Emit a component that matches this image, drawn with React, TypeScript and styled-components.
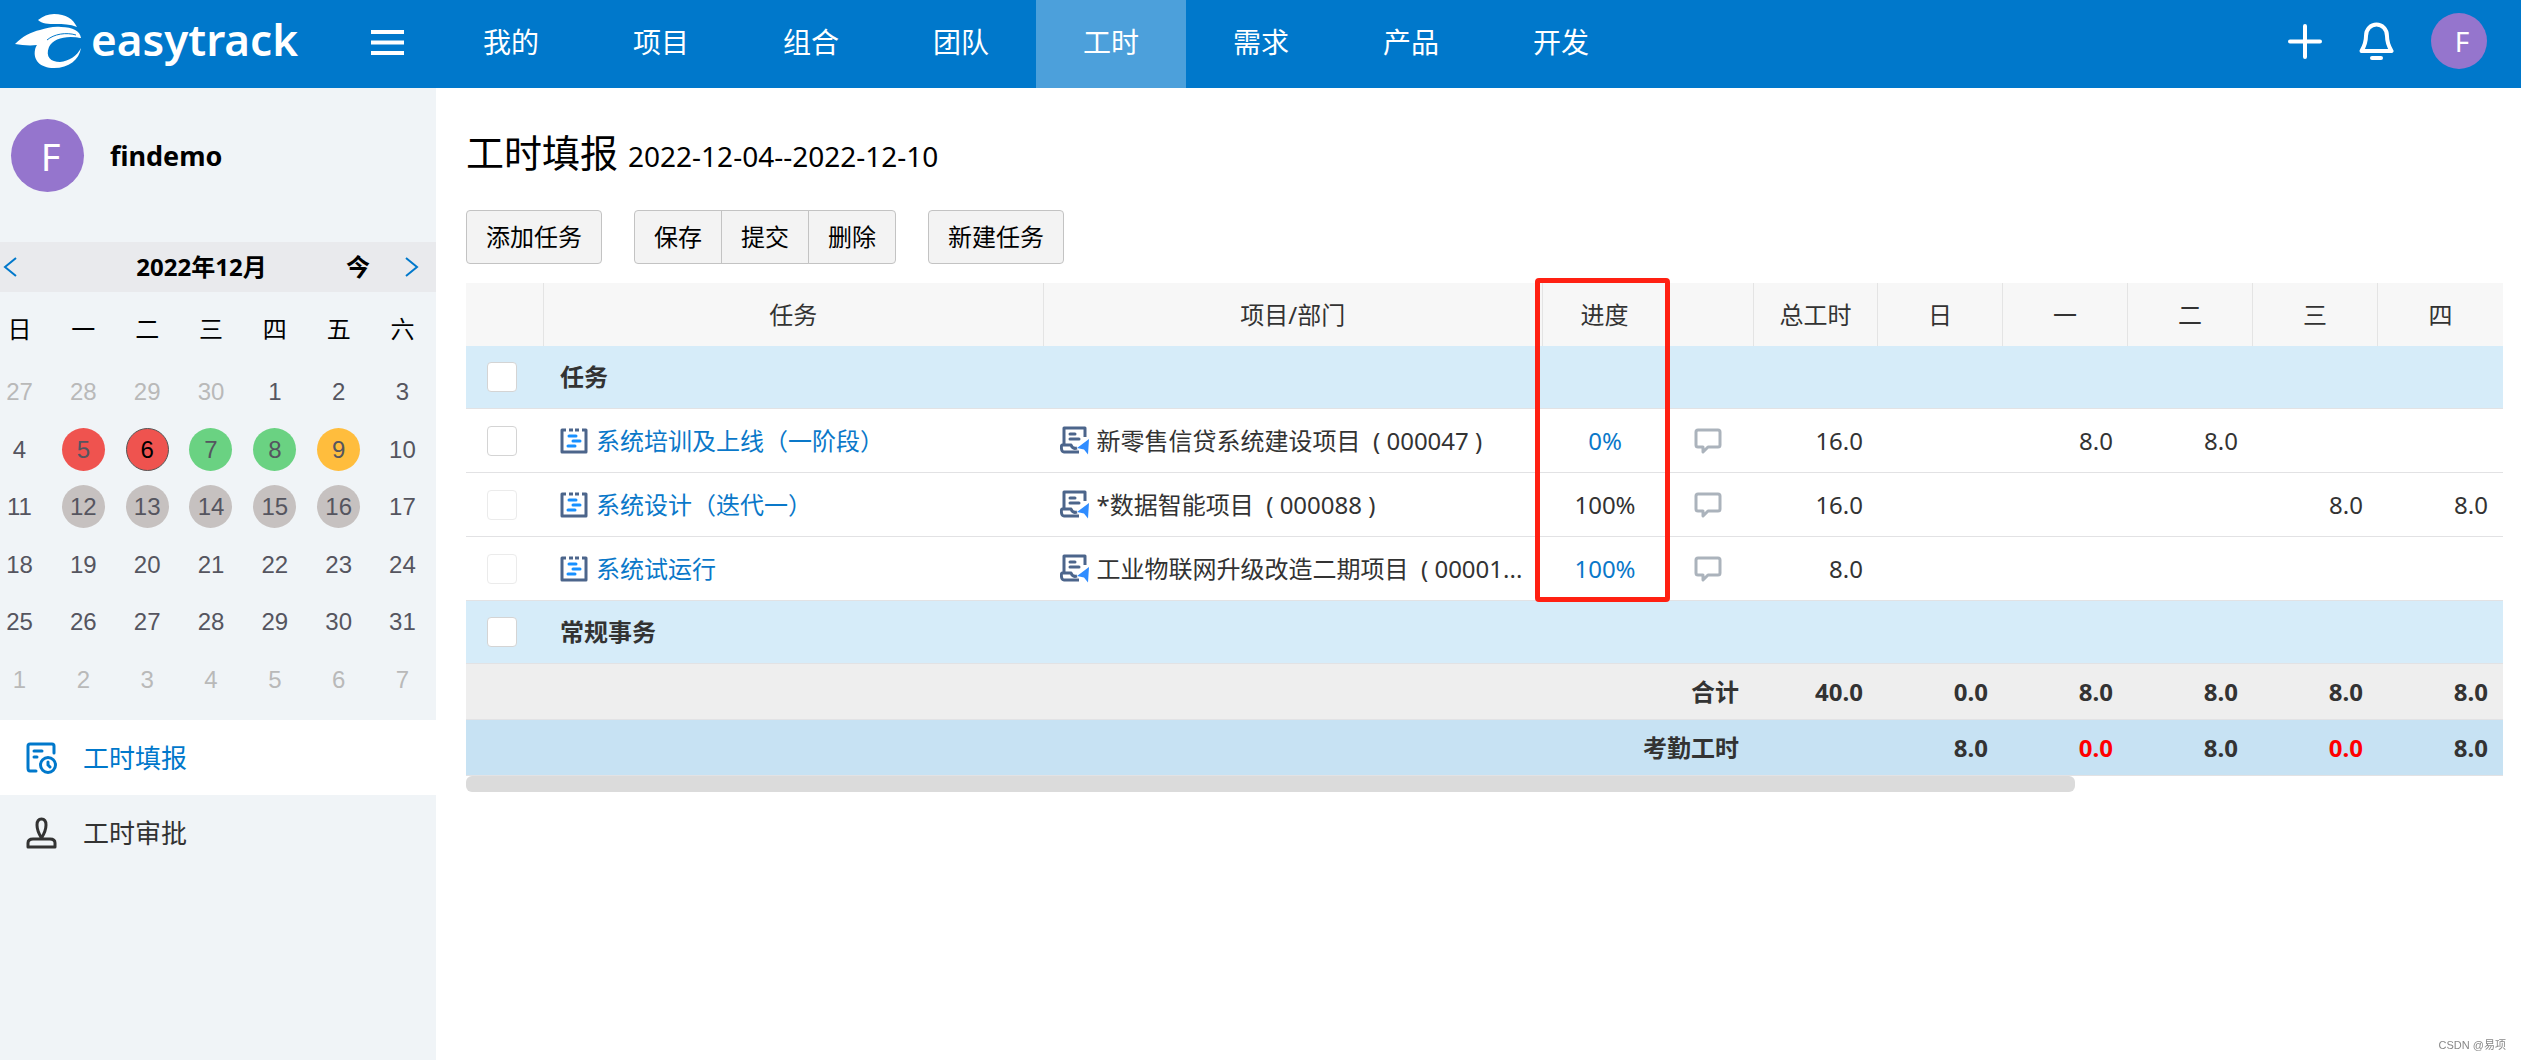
import React from 'react';
import styled, { createGlobalStyle, css } from 'styled-components';

const sans = `"Noto Sans", "Noto Sans CJK SC", sans-serif`;

const Global = createGlobalStyle`
  *, *::before, *::after { box-sizing: border-box; }
  body { margin: 0; background: #fff; color: #333; font-family: ${sans}; font-size: 24px; line-height: 32px; }
  button { font: inherit; color: inherit; background: none; border: 0; padding: 0; cursor: pointer; }
  a { color: inherit; text-decoration: none; }
  svg { display: block; flex: none; }
`;

const Page = styled.div`
  display: flex;
  flex-direction: column;
  min-height: 100vh;
`;

const TopBar = styled.header`
  display: flex;
  height: 88px;
  background: #0078cb;
  color: #fff;
`;

const Brand = styled.div`
  display: flex;
  width: 436px;
  flex: none;
  justify-content: space-between;
  padding: 0 32px 0 14px;
`;

const Logo = styled.a`
  display: flex;
  gap: 7px;
  padding-top: 13px;
`;

const LogoText = styled.span`
  font-size: 44px;
  font-weight: 600;
  line-height: 52px;
`;

const MenuButton = styled.button`
  display: flex;
  align-self: flex-start;
  margin-top: 30px;
`;

const Nav = styled.nav`
  display: flex;
  flex: 1;
`;

const NavLink = styled.a<{ $active?: boolean }>`
  width: 150px;
  font-size: 28px;
  line-height: 84px;
  text-align: center;
  background: ${p => (p.$active ? '#4ca0db' : 'transparent')};
`;

const Tools = styled.div`
  display: flex;
  align-items: center;
  gap: 37px;
  height: 82px;
  padding-right: 34px;
`;

const Avatar = styled.span<{ $size: number; $font: number }>`
  display: flex;
  align-items: center;
  justify-content: center;
  width: ${p => p.$size}px;
  height: ${p => p.$size}px;
  padding-left: 6px;
  border-radius: 50%;
  background: #9575cd;
  color: #fff;
  font-size: ${p => p.$font}px;
`;

const Body = styled.div`
  display: flex;
  flex: 1;
`;

const Sidebar = styled.aside`
  width: 436px;
  flex: none;
  background: #f0f4f7;
`;

const Profile = styled.div`
  display: flex;
  align-items: flex-start;
  gap: 26px;
  height: 154px;
  padding: 31px 11px 0;
  color: #000;
`;

const UserName = styled.strong`
  font-size: 27px;
  line-height: 74px;
`;

const MonthBar = styled.div`
  display: grid;
  grid-template-columns: 56px 1fr 40px 58px;
  align-items: center;
  height: 50px;
  padding-left: 3px;
  background: #e9eaed;
  color: #000;
  font-weight: 700;
`;

const Month = styled.span`
  padding-left: 6px;
  text-align: center;
`;

const ArrowButton = styled.button<{ $end?: boolean }>`
  display: flex;
  justify-content: ${p => (p.$end ? 'flex-end' : 'flex-start')};
  padding-right: ${p => (p.$end ? 17 : 0)}px;
`;

const Week = styled.div`
  display: grid;
  grid-template-columns: repeat(7, 43px);
  justify-content: space-between;
  margin-left: -2px;
  padding: 21px 12px 18px 0;
  text-align: center;
  color: #000;
`;

const Days = styled.div`
  display: grid;
  grid-template-columns: repeat(7, 43px);
  grid-template-rows: repeat(6, 1fr);
  justify-content: space-between;
  align-items: center;
  height: 345px;
  margin: 0 12px 12px -2px;
`;

type Tone = 'red' | 'green' | 'amber' | 'grey';
const toneColor: Record<Tone, string> = {
  red: '#ef534f',
  green: '#6ad282',
  amber: '#ffbd3d',
  grey: '#c6c1c0',
};

const Day = styled.button<{ $muted: boolean; $tone?: Tone; $today: boolean }>`
  height: 43px;
  border-radius: 50%;
  font-family: "Liberation Sans", sans-serif;
  line-height: 41px;
  color: ${p => (p.$today ? '#000' : p.$muted ? '#b9b9b9' : '#55555f')};
  background: ${p => (p.$tone ? toneColor[p.$tone] : 'transparent')};
  ${p => p.$today && css`border: 1px solid #555;`}
`;

const SideLink = styled.a<{ $active?: boolean }>`
  display: flex;
  align-items: center;
  gap: 25px;
  height: 75px;
  padding-left: 26px;
  font-size: 26px;
  color: ${p => (p.$active ? '#0078cb' : '#333')};
  background: ${p => (p.$active ? '#fff' : 'transparent')};
`;

const Main = styled.main`
  flex: 1;
  min-width: 0;
  padding: 36px 18px 0 30px;
`;

const Title = styled.h1`
  margin: 0 0 26px;
  font-size: 38px;
  font-weight: 400;
  line-height: 56px;
  color: #000;
`;

const Range = styled.span`
  margin-left: 10px;
  font-size: 28px;
`;

const Toolbar = styled.div`
  display: flex;
  gap: 32px;
  margin-bottom: 19px;
`;

const ButtonGroup = styled.div`
  display: flex;
`;

const Button = styled.button`
  height: 54px;
  padding: 0 19px;
  border: 1px solid #c3c3c3;
  background: #f3f3f3;
  color: #000;
  &:first-child { border-radius: 4px 0 0 4px; }
  &:last-child { border-radius: 0 4px 4px 0; }
  &:only-child { border-radius: 4px; }
  & + & { margin-left: -1px; }
`;

const Table = styled.table`
  width: 100%;
  table-layout: fixed;
  border-collapse: separate;
  border-spacing: 0;
`;

const Col = styled.col<{ $w?: number }>`
  width: ${p => (p.$w ? `${p.$w}px` : 'auto')};
`;

const Head = styled.th`
  position: relative;
  height: 63px;
  padding: 0;
  font-weight: 400;
  background: #f7f7f7;
  border-right: 1px solid #e4e4e4;
  &:last-child { border-right: 0; }
`;

/* Red frame round the progress column, header through last task row. */
const Highlight = styled.span`
  position: absolute;
  z-index: 1;
  top: -5px;
  left: -8px;
  right: -4px;
  height: 324px;
  border: 5px solid #ff2012;
  border-radius: 4px;
  pointer-events: none;
`;

const Row = styled.tr<{ $kind: 'group' | 'task' | 'total' | 'attendance' }>`
  height: ${p => ({ group: 63, task: 64, total: 56, attendance: 56 })[p.$kind]}px;
  background: ${p => ({ group: '#d6ecf9', task: '#fff', total: '#eee', attendance: '#c7e2f3' })[p.$kind]};
  font-weight: ${p => (p.$kind === 'task' ? 400 : 700)};
`;

const Cell = styled.td<{ $align?: 'left' | 'center' | 'right'; $red?: boolean }>`
  padding: 0 15px;
  border-bottom: 1px solid #e2e2e4;
  text-align: ${p => p.$align ?? 'left'};
  white-space: pre;
  color: ${p => (p.$red ? '#f00' : 'inherit')};
`;

const TextCell = styled(Cell)`
  padding: 0 0 0 16px;
`;

const Check = styled.input`
  appearance: none;
  display: block;
  width: 30px;
  height: 30px;
  margin: 0 0 0 6px;
  border: 1px solid #d4d4d4;
  border-radius: 4px;
  background: #fff;
  &:disabled { border-color: #ebebeb; }
`;

const IconText = styled.span`
  display: flex;
  align-items: center;
  gap: 8px;
`;

const TaskLink = styled.a`
  color: #0a78c9;
`;

const CommentButton = styled.button`
  display: block;
  margin-left: 12px;
`;

const ScrollThumb = styled.div`
  width: 79%;
  height: 16px;
  border-radius: 6px;
  background: #dbdbdb;
`;

const Watermark = styled.small`
  position: fixed;
  right: 15px;
  bottom: 7px;
  font-family: "Liberation Sans", "Noto Sans CJK SC", sans-serif;
  font-size: 11px;
  line-height: 16px;
  color: #888;
`;

const LogoMark = () => (
  <svg width="70" height="56" viewBox="0 0 70 56" fill="#fff" aria-hidden="true">
    <path d="M24 7C29 3 34 1 40 1c12 0 19 5 23 13-7-3-14-3-21-3-8 0-14 0-18-4Z" />
    <path d="M1 31C9 23 17 19 26 17c7-2 14-4 21-3 12 0 19 4 20 11-9-3-18-3-25 1-5 2-8 5-11 9-2-3-5-3-8-3-8 1-15 0-22-1Z" />
    <path d="M67 25C53 22 39 25 35 34c-4 10 2 15 11 15 9-1 17-6 21-14-2 12-12 20-27 20-14 0-21-8-19-18C23 26 38 19 53 20c7 1 12 2 14 5Z" />
    <path d="M33 27c7-6 19-8 29-5" fill="none" stroke="#0078cb" strokeWidth="1" />
  </svg>
);

const TaskIcon = () => (
  <svg width="28" height="26" viewBox="0 0 28 26" fill="none" aria-hidden="true">
    <path d="M6 2H2v22h24V2h-4" stroke="#4c658b" strokeWidth="3" strokeLinejoin="round" />
    <path d="M9 2h4M15 2h4" stroke="#4c658b" strokeWidth="3" />
    <path d="M9 8h7M13 13h7M8 18h7" stroke="#1890ff" strokeWidth="3" strokeLinecap="round" />
  </svg>
);

const ProjectIcon = () => (
  <svg width="29" height="29" viewBox="0 0 29 29" fill="none" aria-hidden="true">
    <path d="M4 18V2h21v9M19 26H4c-3 0-3-6-2-7h9c1 3 3 4 6 3" stroke="#4c658b" strokeWidth="3" strokeLinejoin="round" />
    <path d="M10 8h5M10 13h9" stroke="#4c658b" strokeWidth="3" strokeLinecap="round" />
    <path d="M29 13l-1 15.500-4-5-7-1.500Z" fill="#2f8cff" />
  </svg>
);

const CommentIcon = () => (
  <svg width="28" height="26" viewBox="0 0 28 26" fill="none" stroke="#abb3bc" strokeWidth="3" strokeLinejoin="round" aria-hidden="true">
    <path d="M4 2h20q2 0 2 2v13q0 2-2 2H14l-5 5v-5H4q-2 0-2-2V4q0-2 2-2Z" />
  </svg>
);

const SheetIcon = () => (
  <svg width="32" height="32" viewBox="0 0 32 32" fill="none" stroke="currentColor" strokeWidth="3" strokeLinecap="round" aria-hidden="true">
    <path d="M28 11V4q0-2-2-2H4Q2 2 2 4v22q0 3 2 3h6M8 9h8M8 15h3" />
    <circle cx="22" cy="23" r="7.500" />
    <path d="M22 20v3l2 2" />
  </svg>
);

const StampIcon = () => (
  <svg width="32" height="32" viewBox="0 0 32 32" fill="none" stroke="currentColor" strokeWidth="3" strokeLinejoin="round" aria-hidden="true">
    <path d="M15.500 21C13 17 11 13 11 8q0-6 4.500-6T20 8c0 5-2 9-4.500 13ZM2 30v-4q0-4 5-4h17q5 0 5 4v4Z" />
  </svg>
);

const weekdays = ['日', '一', '二', '三', '四', '五', '六'];
const tones: Record<number, Tone> = {
  5: 'red', 6: 'red', 7: 'green', 8: 'green', 9: 'amber',
  12: 'grey', 13: 'grey', 14: 'grey', 15: 'grey', 16: 'grey',
};
const days = [
  ...[27, 28, 29, 30].map(n => ({ n, muted: true })),
  ...Array.from({ length: 31 }, (_, i) => ({ n: i + 1, muted: false })),
  ...[1, 2, 3, 4, 5, 6, 7].map(n => ({ n, muted: true })),
];

const nav = ['我的', '项目', '组合', '团队', '工时', '需求', '产品', '开发'];
const columns = [
  { name: '', w: 78 },
  { name: '任务' },
  { name: '项目/部门' },
  { name: '进度', w: 124 },
  { name: '', w: 87 },
  { name: '总工时', w: 124 },
  ...weekdays.slice(0, 5).map(name => ({ name, w: 125 })),
];
const tasks = [
  { name: '系统培训及上线（一阶段）', project: '新零售信贷系统建设项目  ( 000047 )', progress: '0%', link: true, hours: ['16.0', '', '8.0', '8.0', '', ''], open: true },
  { name: '系统设计（迭代一）', project: '*数据智能项目  ( 000088 )', progress: '100%', link: false, hours: ['16.0', '', '', '', '8.0', '8.0'], open: false },
  { name: '系统试运行', project: '工业物联网升级改造二期项目  ( 00001...', progress: '100%', link: true, hours: ['8.0', '', '', '', '', ''], open: false },
];
const totals = ['40.0', '0.0', '8.0', '8.0', '8.0', '8.0'];
const attendance = ['', '8.0', '0.0', '8.0', '0.0', '8.0'];

const GroupRow = ({ name }: { name: string }) => (
  <Row $kind="group">
    <Cell><Check type="checkbox" aria-label={name} /></Cell>
    <TextCell colSpan={10}>{name}</TextCell>
  </Row>
);

export default function App() {
  return (
    <Page>
      <Global />
      <TopBar>
        <Brand>
          <Logo href="#">
            <LogoMark />
            <LogoText>easytrack</LogoText>
          </Logo>
          <MenuButton aria-label="菜单">
            <svg width="33" height="25" viewBox="0 0 33 25" fill="#fff">
              <path d="M0 0h33v4H0zM0 10.500h33v4H0zM0 21h33v4H0z" />
            </svg>
          </MenuButton>
        </Brand>
        <Nav>
          {nav.map(name => (
            <NavLink key={name} href="#" $active={name === '工时'}>{name}</NavLink>
          ))}
        </Nav>
        <Tools>
          <button aria-label="新建">
            <svg width="34" height="35" viewBox="0 0 34 35" stroke="#fff" strokeWidth="4" strokeLinecap="round">
              <path d="M17 2v31M2 17.500h30" />
            </svg>
          </button>
          <button aria-label="通知">
            <svg width="35" height="38" viewBox="0 0 35 38" fill="none" stroke="#fff" strokeWidth="4" strokeLinecap="round" strokeLinejoin="round">
              <path d="M2.500 29c3-5 4.500-9 4.500-15C7 7 12 2.500 17.500 2.500S28 7 28 14c0 6 1.500 10 4.500 15Z" />
              <path d="M13 36h9" />
            </svg>
          </button>
          <Avatar $size={56} $font={28}>F</Avatar>
        </Tools>
      </TopBar>
      <Body>
        <Sidebar>
          <Profile>
            <Avatar $size={73} $font={38}>F</Avatar>
            <UserName>findemo</UserName>
          </Profile>
          <MonthBar>
            <ArrowButton aria-label="上个月">
              <svg width="14" height="20" viewBox="0 0 14 20" fill="none" stroke="#0078cb" strokeWidth="2"><path d="M13 1 2 10l11 9" /></svg>
            </ArrowButton>
            <Month>2022年12月</Month>
            <button>今</button>
            <ArrowButton $end aria-label="下个月">
              <svg width="14" height="20" viewBox="0 0 14 20" fill="none" stroke="#0078cb" strokeWidth="2"><path d="m1 1 11 9L1 19" /></svg>
            </ArrowButton>
          </MonthBar>
          <Week>
            {weekdays.map(d => <span key={d}>{d}</span>)}
          </Week>
          <Days>
            {days.map(({ n, muted }, i) => (
              <Day key={i} $muted={muted} $tone={muted ? undefined : tones[n]} $today={!muted && n === 6}>{n}</Day>
            ))}
          </Days>
          <SideLink href="#" $active><SheetIcon />工时填报</SideLink>
          <SideLink href="#"><StampIcon />工时审批</SideLink>
        </Sidebar>
        <Main>
          <Title>工时填报<Range>2022-12-04--2022-12-10</Range></Title>
          <Toolbar>
            <ButtonGroup><Button>添加任务</Button></ButtonGroup>
            <ButtonGroup>
              <Button>保存</Button>
              <Button>提交</Button>
              <Button>删除</Button>
            </ButtonGroup>
            <ButtonGroup><Button>新建任务</Button></ButtonGroup>
          </Toolbar>
          <Table>
            <colgroup>
              {columns.map((c, i) => <Col key={i} $w={c.w} />)}
            </colgroup>
            <thead>
              <tr>
                {columns.map((c, i) => (
                  <Head key={i}>{c.name}{c.name === '进度' && <Highlight />}</Head>
                ))}
              </tr>
            </thead>
            <tbody>
              <GroupRow name="任务" />
              {tasks.map(t => (
                <Row key={t.name} $kind="task">
                  <Cell><Check type="checkbox" aria-label={t.name} disabled={!t.open} /></Cell>
                  <TextCell>
                    <IconText><TaskIcon /><TaskLink href="#">{t.name}</TaskLink></IconText>
                  </TextCell>
                  <TextCell><IconText><ProjectIcon />{t.project}</IconText></TextCell>
                  <Cell $align="center">{t.link ? <TaskLink href="#">{t.progress}</TaskLink> : t.progress}</Cell>
                  <Cell><CommentButton aria-label="备注"><CommentIcon /></CommentButton></Cell>
                  {t.hours.map((h, i) => <Cell key={i} $align="right">{h}</Cell>)}
                </Row>
              ))}
              <GroupRow name="常规事务" />
            </tbody>
            <tfoot>
              <Row $kind="total">
                <Cell colSpan={5} $align="right">合计</Cell>
                {totals.map((h, i) => <Cell key={i} $align="right">{h}</Cell>)}
              </Row>
              <Row $kind="attendance">
                <Cell colSpan={5} $align="right">考勤工时</Cell>
                {attendance.map((h, i) => <Cell key={i} $align="right" $red={h === '0.0'}>{h}</Cell>)}
              </Row>
            </tfoot>
          </Table>
          <ScrollThumb />
        </Main>
      </Body>
      <Watermark>CSDN @易项</Watermark>
    </Page>
  );
}
